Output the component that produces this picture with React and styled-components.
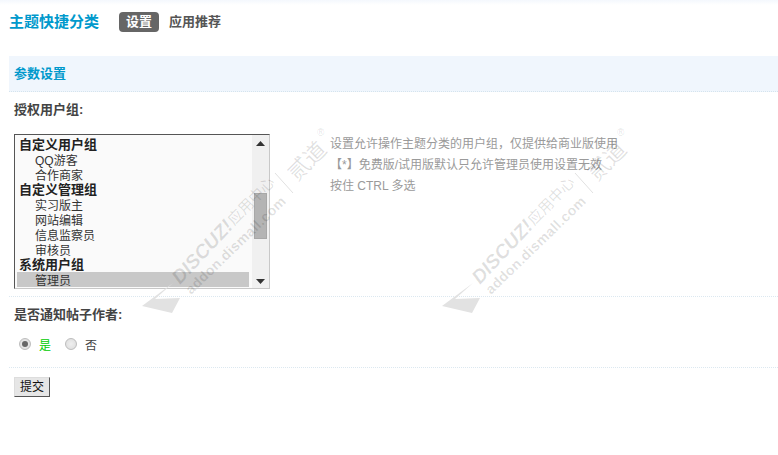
import React from 'react';
import styled, { createGlobalStyle } from 'styled-components';

const Global = createGlobalStyle`
  html, body { margin: 0; padding: 0; background: #fff; }
  body { font-family: "Liberation Sans", "Noto Sans CJK SC", sans-serif; font-size: 12px; color: #444; }
  * { box-sizing: border-box; }
`;
const Page = styled.div`
  position: relative; width: 778px; height: 455px; overflow: hidden;
  background: linear-gradient(#f4f8fd 0, #fff 5px);
`;
const Header = styled.header`
  display: flex; align-items: center; height: 56px; padding: 0 0 12px 9px;
`;
const Title = styled.h1`
  margin: 0 20px 0 0; font-size: 15px; line-height: 20px; font-weight: 700; color: #0099cc;
`;
const Tab = styled.a`
  display: block; height: 20px; line-height: 20px; font-size: 13px; font-weight: 700; padding: 0 7px; border-radius: 4px;
  margin-right: 3px;
  color: ${p => (p.$active ? '#fff' : '#555')};
  background: ${p => (p.$active ? '#666' : 'transparent')};
`;
const SectionBar = styled.div`
  margin-left: 9px; height: 36px; padding-left: 5px; line-height: 36px; font-size: 13px; font-weight: 700;
  color: #0099cc; background: #f0f6fd; border-bottom: 1px dotted #d5e4ee;
`;
const Label = styled.div`
  font-size: 13px; font-weight: 700; line-height: 18px; color: #444; padding-left: 14px;
  margin-top: 9px;
`;
const SettingRow = styled.div`
  display: flex; padding: 15px 0 7px 14px;
`;
const ListBox = styled.div`
  display: flex; width: 256px; height: 155px; flex: none; background: #fafafa;
  border: 1px solid #c8c8c8; border-top-color: #555; border-left-color: #555;
`;
const Options = styled.div`
  flex: 1; padding: 2px 3px 0 2px; overflow: hidden;
`;
const GroupName = styled.div`
  height: 15px; line-height: 15px; font-size: 13px; font-weight: 700; color: #222; white-space: nowrap;
  padding-left: 2px;
`;
const Option = styled.div`
  height: 15px; line-height: 18px; font-size: 12px; color: #333; white-space: nowrap; padding-left: 18px;
  background: ${p => (p.$selected ? '#c8c8c8' : 'transparent')};
`;
const ScrollBar = styled.div`
  display: flex; flex-direction: column; align-items: center; justify-content: space-between;
  width: 17px; padding: 6px 0 4px; background: #f0f0f0;
`;
const Thumb = styled.div`
  width: 13px; height: 46px; margin-top: 40px; margin-bottom: 33px; background: #b4b4b4; border: 1px solid #a8a8a8;
`;
const Help = styled.div`
  margin-left: 60px; line-height: 21px; font-size: 12px; color: #9a9a9a; white-space: nowrap;
`;
const Divider = styled.div`
  margin-left: 9px; height: 0; border-top: 1px dotted #dce8f0;
`;
const RadioRow = styled.div`
  display: flex; align-items: center; height: 22px; margin-top: 9px; margin-bottom: 12px; padding-left: 19px;
  font-size: 12px;
`;
const RadioCircle = styled.span`
  position: relative; flex: none; width: 12px; height: 12px; border-radius: 50%; margin-right: 8px;
  background: radial-gradient(circle at 50% 50%, #efefef 0, #e2e2e2 65%, #d0d0d0 100%); border: 1px solid #bdbdbd;
  &::after {
    content: ""; display: ${p => (p.$checked ? 'block' : 'none')}; position: absolute; left: 2px; top: 2px;
    width: 6px; height: 6px; border-radius: 50%; background: #666;
  }
`;
const RadioText = styled.span`
  width: 26px; color: ${p => (p.$on ? '#00cc00' : '#444')};
`;
const SubmitRow = styled.div`
  padding: 9px 0 0 14px;
`;
const Submit = styled.button`
  display: block; width: 36px; height: 20px; padding: 0; font: 12px/17px "Liberation Sans", "Noto Sans CJK SC", sans-serif;
  color: #111; background: #e6e6e6; border: 1px solid; border-color: #ddd #555 #555 #ddd;
`;
const Watermark = styled.svg`
  position: absolute; top: 110px; width: 240px; height: 220px; left: ${p => p.$left}px; pointer-events: none;
`;

const Mark = ({ left }) => (
  <Watermark $left={left} viewBox="0 -10 240 220">
    <path d="M12 186 L43 163 L25 179 L50 178 L42 193 Z" fill="#e2e2e2" />
    <g fontFamily='"Liberation Sans", "Noto Sans CJK SC", sans-serif' fill="rgba(0,0,0,0.12)">
      <text transform="translate(50 165) rotate(-47)" fontSize="19.5" fontWeight="700" fontStyle="italic">DISCUZ!</text>
      <text transform="translate(104 106) rotate(-46)" fontSize="15">应用中心</text>
      <text transform="translate(61 175) rotate(-44)" fontSize="14" fontWeight="700" letterSpacing="0.4">addon.dismall.com</text>
      <path d="M145 53 L163 73" stroke="rgba(0,0,0,0.12)" fill="none" />
      <text transform="translate(167 62) rotate(-45)" fontSize="22">贰道</text>
      <text x="187" y="16" fontSize="10">®</text>
    </g>
  </Watermark>
);

export default function App() {
  return (
    <Page>
      <Global />
      <Header>
        <Title>主题快捷分类</Title>
        <Tab $active>设置</Tab>
        <Tab>应用推荐</Tab>
      </Header>
      <SectionBar>参数设置</SectionBar>
      <Label>授权用户组:</Label>
      <SettingRow>
        <ListBox>
          <Options>
            <GroupName>自定义用户组</GroupName>
            <Option>QQ游客</Option>
            <Option>合作商家</Option>
            <GroupName>自定义管理组</GroupName>
            <Option>实习版主</Option>
            <Option>网站编辑</Option>
            <Option>信息监察员</Option>
            <Option>审核员</Option>
            <GroupName>系统用户组</GroupName>
            <Option $selected>管理员</Option>
          </Options>
          <ScrollBar>
            <svg width="9" height="5"><path d="M4.5 0 L9 5 H0 Z" fill="#333" /></svg>
            <Thumb />
            <svg width="9" height="5"><path d="M0 0 H9 L4.5 5 Z" fill="#333" /></svg>
          </ScrollBar>
        </ListBox>
        <Help>
          设置允许操作主题分类的用户组，仅提供给商业版使用<br />
          【*】免费版/试用版默认只允许管理员使用设置无效<br />
          按住 CTRL 多选
        </Help>
      </SettingRow>
      <Divider />
      <Label>是否通知帖子作者:</Label>
      <RadioRow>
        <RadioCircle $checked /><RadioText $on>是</RadioText>
        <RadioCircle /><RadioText>否</RadioText>
      </RadioRow>
      <Divider />
      <SubmitRow><Submit>提交</Submit></SubmitRow>
      <Mark left={130} />
      <Mark left={430} />
    </Page>
  );
}
